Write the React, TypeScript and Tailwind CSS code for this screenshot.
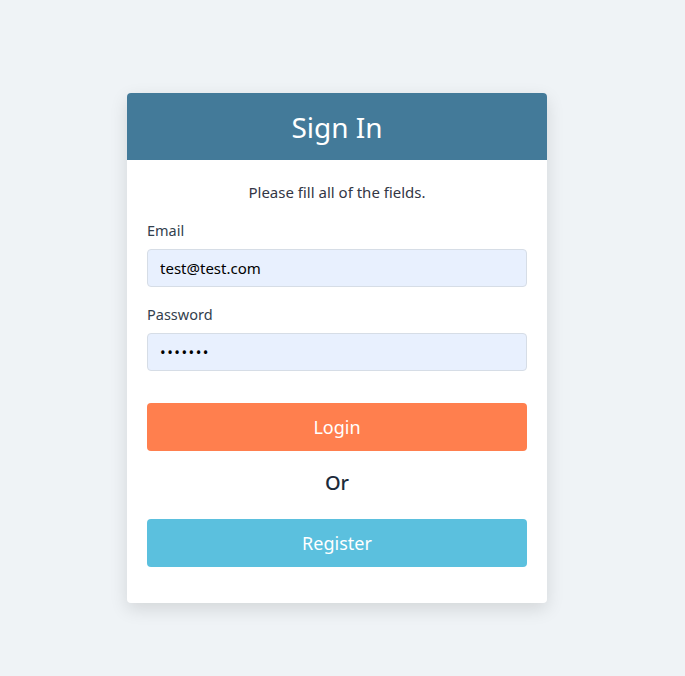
export default function App() {
  return (
    <div className="min-h-[676px] w-full bg-[#eff3f6] pt-[93px] pr-[11px] font-['Noto_Sans','Open_Sans',sans-serif]">
      <div className="mx-auto w-[420px] overflow-hidden rounded-[4px] bg-white shadow-[0_6px_18px_rgba(0,0,0,0.12)]">
        <div className="flex h-[67px] items-center justify-center bg-[#437a99]">
          <h1 className="text-[28px] leading-none text-white">Sign In</h1>
        </div>
        <form className="flex flex-col px-5 pt-[21px] pb-[36px]" onSubmit={(e) => e.preventDefault()}>
          <p className="text-center text-[15px] leading-[22px] text-[#333645]">Please fill all of the fields.</p>
          <label className="mt-4 text-[14.5px] leading-[22px] text-[#33404d]">Email</label>
          <input
            type="email"
            defaultValue="test@test.com"
            className="mt-2 h-[38px] rounded-[4px] border border-[#d6dde6] bg-[#e8f0fe] px-3 text-[15px] text-black outline-none"
          />
          <label className="mt-4 text-[14.5px] leading-[22px] text-[#33404d]">Password</label>
          <input
            type="password"
            defaultValue="1234567"
            className="mt-2 h-[38px] rounded-[4px] border border-[#d6dde6] bg-[#e8f0fe] px-3 text-[15px] tracking-[1.5px] text-black outline-none"
          />
          <button className="mt-8 h-12 rounded-[4px] bg-[#ff7f4e] text-[18px] text-white">Login</button>
          <p className="mt-[18px] text-center text-[20px] font-medium leading-[28px] text-[#1c2b3a]">Or</p>
          <button type="button" className="mt-[22px] h-12 rounded-[4px] bg-[#5bc0de] text-[18px] text-white">
            Register
          </button>
        </form>
      </div>
    </div>
  )
}
